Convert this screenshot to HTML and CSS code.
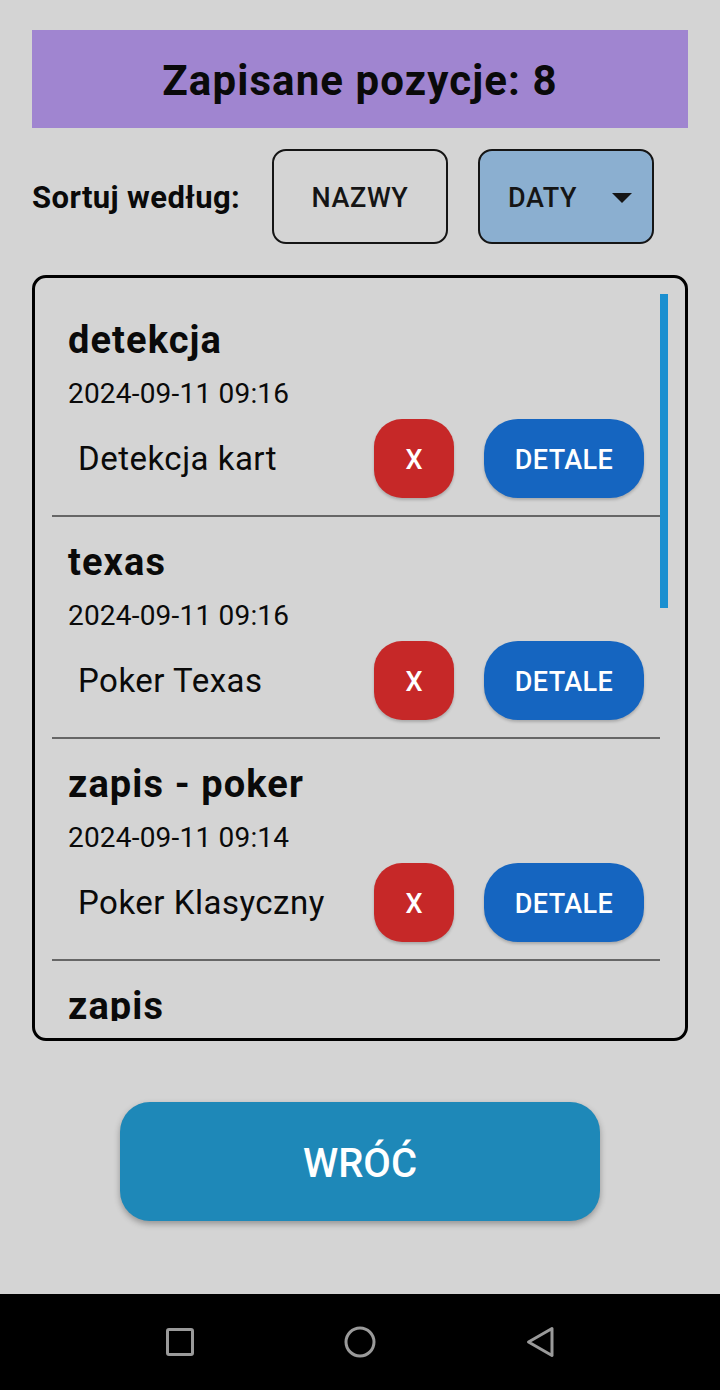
FILE: index.html
```html
<!DOCTYPE html>
<html lang="pl">
<head>
<meta charset="utf-8">
<title>Zapisane pozycje</title>
<link rel="stylesheet" href="styles.css">
</head>
<body>
<div class="screen">
  <div class="header">Zapisane pozycje: 8</div>
  <div class="sort-row">
    <span class="sort-label">Sortuj według:</span>
    <button class="sort-btn">NAZWY</button>
    <button class="sort-btn active"><span>DATY</span><span class="caret"></span></button>
  </div>
  <div class="list">
    <div class="scroll">
      <div class="item">
        <div class="item-title">detekcja</div>
        <div class="item-date">2024-09-11 09:16</div>
        <div class="item-row">
          <span class="item-type">Detekcja kart</span>
          <button class="btn-x">X</button>
          <button class="btn-details">DETALE</button>
        </div>
      </div>
      <div class="item">
        <div class="item-title">texas</div>
        <div class="item-date">2024-09-11 09:16</div>
        <div class="item-row">
          <span class="item-type">Poker Texas</span>
          <button class="btn-x">X</button>
          <button class="btn-details">DETALE</button>
        </div>
      </div>
      <div class="item">
        <div class="item-title">zapis - poker</div>
        <div class="item-date">2024-09-11 09:14</div>
        <div class="item-row">
          <span class="item-type">Poker Klasyczny</span>
          <button class="btn-x">X</button>
          <button class="btn-details">DETALE</button>
        </div>
      </div>
      <div class="item">
        <div class="item-title">zapis</div>
        <div class="item-date">2024-09-11 09:10</div>
        <div class="item-row">
          <span class="item-type">Poker Klasyczny</span>
          <button class="btn-x">X</button>
          <button class="btn-details">DETALE</button>
        </div>
      </div>
    </div>
    <div class="scrollbar"></div>
  </div>
  <div class="back-wrap">
    <button class="back-btn">WRÓĆ</button>
  </div>
</div>
<div class="navbar">
  <svg class="nav-icon" width="40" height="40" viewBox="0 0 40 40"><rect x="7.5" y="7.5" width="25" height="25" rx="1.5" fill="none" stroke="#9a9a9a" stroke-width="3"/></svg>
  <svg class="nav-icon" width="40" height="40" viewBox="0 0 40 40"><circle cx="20" cy="20" r="14" fill="none" stroke="#9a9a9a" stroke-width="3"/></svg>
  <svg class="nav-icon" width="40" height="40" viewBox="0 0 40 40"><path d="M32 6.5 L8.5 20 L32 33.5 Z" fill="none" stroke="#9a9a9a" stroke-width="3" stroke-linejoin="round"/></svg>
</div>
</body>
</html>
```

FILE: styles.css
```css
* { box-sizing: border-box; }
html, body {
  margin: 0;
  padding: 0;
}
body {
  width: 720px;
  height: 1390px;
  background: #d4d4d4;
  font-family: Roboto, "Liberation Sans", sans-serif;
  color: #0a0a0a;
  overflow: hidden;
}
button {
  font-family: inherit;
  border: none;
  margin: 0;
  padding: 0;
  cursor: pointer;
}
.screen {
  height: 1294px;
  padding: 30px 32px 0;
  display: flex;
  flex-direction: column;
}
.header {
  height: 98px;
  background: #a085d0;
  display: flex;
  align-items: center;
  justify-content: center;
  font-size: 42px;
  font-weight: 700;
  letter-spacing: 1.1px;
  color: #0a0a0a;
  padding-top: 2px;
}
.sort-row {
  margin-top: 21px;
  height: 95px;
  display: flex;
  align-items: center;
}
.sort-label {
  font-size: 31px;
  font-weight: 700;
  letter-spacing: 0.4px;
  width: 240px;
  white-space: nowrap;
  padding-top: 2px;
}
.sort-btn {
  width: 176px;
  height: 95px;
  border: 2px solid #151515;
  border-radius: 14px;
  background: transparent;
  font-size: 27px;
  font-weight: 500;
  letter-spacing: 0.6px;
  color: #151515;
  display: flex;
  align-items: center;
  justify-content: center;
  padding-top: 2px;
}
.sort-btn + .sort-btn { margin-left: 30px; }
.sort-btn.active {
  background: #8bafd0;
  justify-content: space-between;
  padding: 2px 20px 0 28px;
}
.caret {
  width: 0;
  height: 0;
  border-left: 10px solid transparent;
  border-right: 10px solid transparent;
  border-top: 10px solid #151515;
}
.list {
  position: relative;
  margin-top: 31px;
  height: 766px;
  border: 3px solid #000;
  border-radius: 14px;
  padding: 17px 25px 17px 17px;
}
.scroll {
  height: 100%;
  overflow: hidden;
}
.item {
  height: 222px;
  border-bottom: 2px solid #666;
  padding: 25px 16px 0;
}
.item-title {
  font-size: 38px;
  font-weight: 700;
  letter-spacing: 1.1px;
  line-height: 40px;
  color: #0a0a0a;
}
.item-date {
  margin-top: 18px;
  font-size: 28px;
  letter-spacing: 0.2px;
  line-height: 32px;
  color: #0a0a0a;
}
.item-row {
  margin-top: 9px;
  height: 79px;
  display: flex;
  align-items: center;
}
.item-type {
  flex: 1;
  padding-left: 10px;
  font-size: 33px;
  letter-spacing: 0.5px;
  color: #0a0a0a;
}
.btn-x {
  width: 80px;
  height: 79px;
  border-radius: 28px;
  background: #c62828;
  color: #fff;
  font-size: 27px;
  font-weight: 500;
  padding-top: 3px;
  box-shadow: 0 2px 3px rgba(0,0,0,0.2);
}
.btn-details {
  margin-left: 30px;
  width: 160px;
  height: 79px;
  border-radius: 34px;
  background: #1565c0;
  color: #fff;
  font-size: 27px;
  font-weight: 500;
  letter-spacing: 0.4px;
  padding-top: 3px;
  box-shadow: 0 2px 3px rgba(0,0,0,0.2);
}
.scrollbar {
  position: absolute;
  right: 17px;
  top: 16px;
  width: 8px;
  height: 314px;
  background: #1b8fd0;
}
.back-wrap {
  margin-top: 61px;
  display: flex;
  justify-content: center;
}
.back-btn {
  width: 480px;
  height: 119px;
  border-radius: 30px;
  background: #1e88b8;
  color: #fff;
  font-size: 40px;
  font-weight: 500;
  padding-top: 3px;
  box-shadow: 0 3px 6px rgba(0,0,0,0.3);
}
.navbar {
  height: 96px;
  background: #000;
  display: flex;
  align-items: center;
  justify-content: center;
  gap: 140px;
}
```
